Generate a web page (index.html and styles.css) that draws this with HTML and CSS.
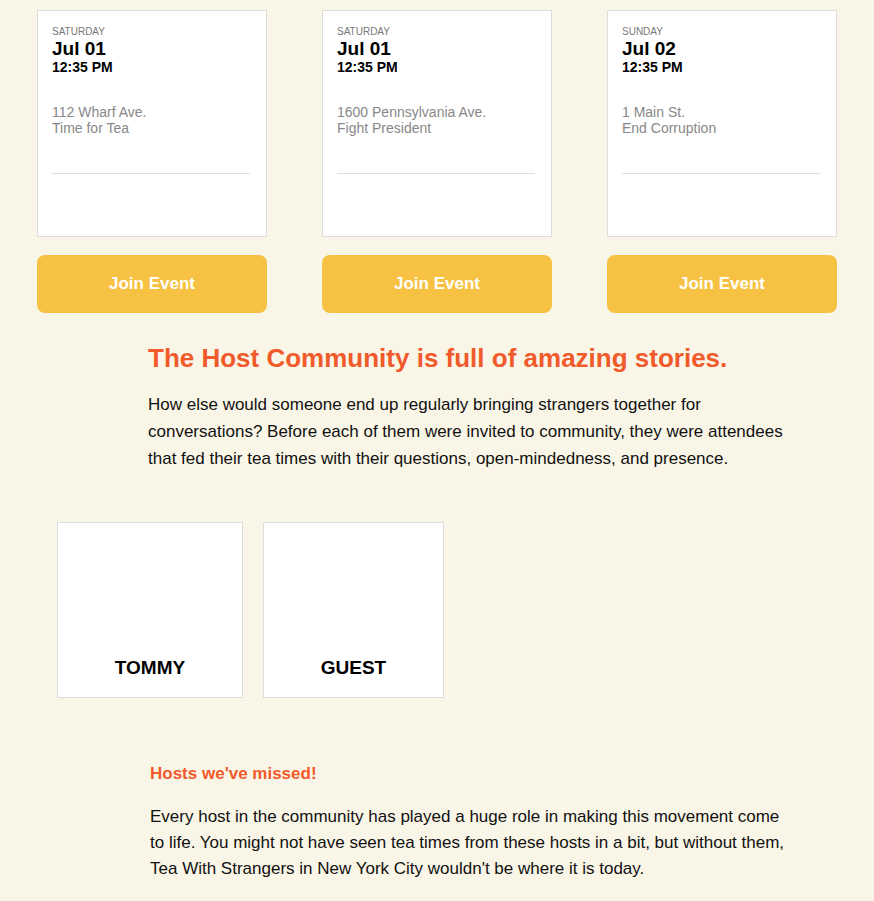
FILE: index.html
```html
<!DOCTYPE html>
<html>
<head>
<meta charset="utf-8">
<link rel="stylesheet" href="styles.css">
</head>
<body>
<div class="page">
  <div class="events">
    <div class="event">
      <div class="card">
        <div class="day">SATURDAY</div>
        <div class="date">Jul 01</div>
        <div class="time">12:35 PM</div>
        <div class="place">112 Wharf Ave.<br>Time for Tea</div>
        <div class="rule"></div>
      </div>
      <button class="join">Join Event</button>
    </div>
    <div class="event">
      <div class="card">
        <div class="day">SATURDAY</div>
        <div class="date">Jul 01</div>
        <div class="time">12:35 PM</div>
        <div class="place">1600 Pennsylvania Ave.<br>Fight President</div>
        <div class="rule"></div>
      </div>
      <button class="join">Join Event</button>
    </div>
    <div class="event">
      <div class="card">
        <div class="day">SUNDAY</div>
        <div class="date">Jul 02</div>
        <div class="time">12:35 PM</div>
        <div class="place">1 Main St.<br>End Corruption</div>
        <div class="rule"></div>
      </div>
      <button class="join">Join Event</button>
    </div>
  </div>

  <section class="intro">
    <h1>The Host Community is full of amazing stories.</h1>
    <p>How else would someone end up regularly bringing strangers together for conversations? Before each of them were invited to community, they were attendees that fed their tea times with their questions, open-mindedness, and presence.</p>
  </section>

  <div class="hosts">
    <div class="host host-a"><span>TOMMY</span></div>
    <div class="host host-b"><span>GUEST</span></div>
  </div>

  <section class="missed">
    <h2>Hosts we've missed!</h2>
    <p>Every host in the community has played a huge role in making this movement come to life. You might not have seen tea times from these hosts in a bit, but without them, Tea With Strangers in New York City wouldn't be where it is today.</p>
  </section>
</div>
</body>
</html>
```

FILE: styles.css
```css
html, body {
  margin: 0;
  padding: 0;
  background: #faf6e7;
}
body {
  font-family: "Liberation Sans", Arial, Helvetica, sans-serif;
  color: #111;
}
.page {
  padding: 10px 37px 0 37px;
}
.events {
  display: flex;
  gap: 55px;
}
.event {
  width: 230px;
  display: flex;
  flex-direction: column;
  gap: 18px;
}
.card {
  box-sizing: border-box;
  height: 227px;
  background: #fff;
  border: 1px solid #dcdcdc;
  padding: 15px 16px 0 14px;
}
.day {
  font-size: 10px;
  color: #777;
  line-height: 12px;
}
.date {
  font-size: 19px;
  font-weight: bold;
  color: #000;
  line-height: 20px;
  margin-top: 1px;
}
.time {
  font-size: 14px;
  font-weight: bold;
  color: #000;
  line-height: 16px;
}
.place {
  margin-top: 29px;
  font-size: 14px;
  line-height: 16px;
  color: #888;
}
.rule {
  margin-top: 37px;
  border-top: 1px solid #ddd;
}
.join {
  height: 58px;
  border: none;
  border-radius: 8px;
  background: #f7c243;
  color: #fff;
  font-family: "Liberation Sans", Arial, sans-serif;
  font-weight: bold;
  font-size: 17px;
  padding: 0;
}
.intro {
  margin: 30px 0 0 111px;
  width: 648px;
}
.intro h1 {
  margin: 0;
  font-size: 26px;
  line-height: 30px;
  color: #f15a2b;
}
.intro p {
  margin: 18px 0 0 0;
  font-size: 17px;
  line-height: 27px;
  color: #111;
}
.hosts {
  display: flex;
  gap: 20px;
  margin: 50px 0 0 20px;
}
.host {
  box-sizing: border-box;
  height: 176px;
  background: #fff;
  border: 1px solid #dcdcdc;
  display: flex;
  align-items: flex-end;
  justify-content: center;
  padding-bottom: 18px;
  font-size: 19px;
  font-weight: bold;
  color: #000;
}
.host-a { width: 186px; }
.host-b { width: 181px; }
.missed {
  margin: 66px 0 0 113px;
  width: 648px;
}
.missed h2 {
  margin: 0;
  font-size: 17px;
  line-height: 20px;
  color: #f15a2b;
}
.missed p {
  margin: 20px 0 0 0;
  font-size: 17px;
  line-height: 26px;
  color: #111;
}
```
